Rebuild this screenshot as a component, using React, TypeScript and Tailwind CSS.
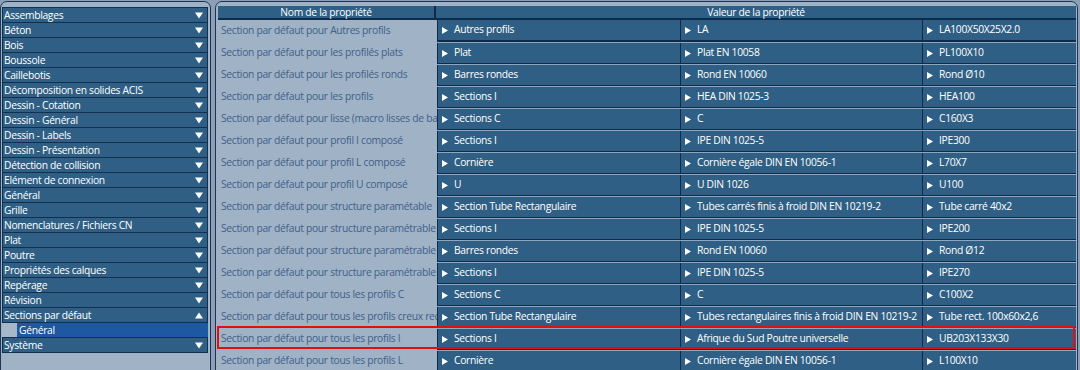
import React from "react";

const categories = [
  "Assemblages",
  "Béton",
  "Bois",
  "Boussole",
  "Caillebotis",
  "Décomposition en solides ACIS",
  "Dessin - Cotation",
  "Dessin - Général",
  "Dessin - Labels",
  "Dessin - Présentation",
  "Détection de collision",
  "Elément de connexion",
  "Général",
  "Grille",
  "Nomenclatures / Fichiers CN",
  "Plat",
  "Poutre",
  "Propriétés des calques",
  "Repérage",
  "Révision",
];

const rows: [string, string, string, string][] = [
  ["Section par défaut pour Autres profils", "Autres profils", "LA", "LA100X50X25X2.0"],
  ["Section par défaut pour les profilés plats", "Plat", "Plat EN 10058", "PL100X10"],
  ["Section par défaut pour les profilés ronds", "Barres rondes", "Rond EN 10060", "Rond Ø10"],
  ["Section par défaut pour les profils", "Sections I", "HEA DIN 1025-3", "HEA100"],
  ["Section par défaut pour lisse (macro lisses de bardage)", "Sections C", "C", "C160X3"],
  ["Section par défaut pour profil I composé", "Sections I", "IPE DIN 1025-5", "IPE300"],
  ["Section par défaut pour profil L composé", "Cornière", "Cornière égale DIN EN 10056-1", "L70X7"],
  ["Section par défaut pour profil U composé", "U", "U DIN 1026", "U100"],
  ["Section par défaut pour structure paramétable", "Section Tube Rectangulaire", "Tubes carrés finis à froid DIN EN 10219-2", "Tube carré 40x2"],
  ["Section par défaut pour structure paramétrable 1", "Sections I", "IPE DIN 1025-5", "IPE200"],
  ["Section par défaut pour structure paramétrable 2", "Barres rondes", "Rond EN 10060", "Rond Ø12"],
  ["Section par défaut pour structure paramétrable 3", "Sections I", "IPE DIN 1025-5", "IPE270"],
  ["Section par défaut pour tous les profils C", "Sections C", "C", "C100X2"],
  ["Section par défaut pour tous les profils creux rectangulaires", "Section Tube Rectangulaire", "Tubes rectangulaires finis à froid DIN EN 10219-2", "Tube rect. 100x60x2,6"],
  ["Section par défaut pour tous les profils I", "Sections I", "Afrique du Sud Poutre universelle", "UB203X133X30"],
  ["Section par défaut pour tous les profils L", "Cornière", "Cornière égale DIN EN 10056-1", "L100X10"],
];

function Down({ up = false }: { up?: boolean }) {
  return (
    <svg width="8" height="7" viewBox="0 0 8 7" className="shrink-0">
      <path d={up ? "M0 6.5 L8 6.5 L4 0.5 Z" : "M0 0.5 L8 0.5 L4 6.5 Z"} fill="#ffffff" />
    </svg>
  );
}

function Play() {
  return (
    <svg width="6" height="7" viewBox="0 0 6 7" className="shrink-0">
      <path d="M0 0 L6 3.5 L0 7 Z" fill="#ffffff" />
    </svg>
  );
}

function CatRow({ label, up = false }: { label: string; up?: boolean }) {
  return (
    <div className="h-[15px] flex items-center justify-between bg-[#2f5f85] border border-[#132f4f] border-t-0 pl-[1px] pr-[4px] text-white leading-none">
      <span className="whitespace-nowrap">{label}</span>
      <Down up={up} />
    </div>
  );
}

function Cell({ text }: { text: string }) {
  return (
    <div className="h-[20px] flex items-center gap-[6px] bg-[#2f5f85] border-l border-[#0f2a4a] pl-[4px] text-white overflow-hidden whitespace-nowrap">
      <Play />
      <span>{text}</span>
    </div>
  );
}

export default function App() {
  return (
    <div className="w-[1080px] h-[370px] overflow-hidden bg-[#8c9fb5] flex gap-[4px] pt-px font-['Open_Sans','Noto_Sans',sans-serif] text-[10.3px] tracking-[-0.3px]">
      {/* left panel */}
      <div className="w-[211px] shrink-0 h-[380px] rounded-t-[7px] border border-[#1b3552] bg-[#9fb2c6] pt-[5px] pl-px pr-[2px]">
        <div className="border-t border-[#132f4f]">
          {categories.map((c) => (
            <CatRow key={c} label={c} />
          ))}
          <CatRow label="Sections par défaut" up />
          <div className="h-[15px] flex items-center bg-[#1f58a2] border-b border-[#132f4f] text-white leading-none">
            <div className="w-[15px] h-full bg-[#a6b7ca]" />
            <span className="pl-[2px]">Général</span>
          </div>
          <CatRow label="Système" />
        </div>
      </div>

      {/* right panel */}
      <div className="flex-1 h-[380px] mr-[2px] rounded-t-[7px] border border-[#1b3552] bg-[#9fb2c6] pt-[4px] pl-[2px] pr-[1px]">
        <div className="h-[14px] flex bg-[#2f5f85] border-b-2 border-[#0f2a4a] text-white leading-none">
          <div className="w-[218px] h-full flex items-center justify-center border-r-2 border-[#0f2a4a]">
            Nom de la propriété
          </div>
          <div className="flex-1 h-full flex items-center justify-center">Valeur de la propriété</div>
        </div>
        {rows.map((r, i) => (
          <div key={i} className="relative h-[22px] grid grid-cols-[219px_243px_242px_1fr]">
            <div className="h-[22px] flex items-center pl-[3px] pr-[2px] text-[#3f6189] overflow-hidden whitespace-nowrap">
              {r[0]}
            </div>
            {[r[1], r[2], r[3]].map((t, j) => (
              <div key={j} className="flex flex-col">
                <div className={i === 0 ? "h-0" : "h-px bg-[#8ea6be]"} />
                <Cell text={t} />
                <div className={i === 0 ? "h-[2px] bg-[#0f2a4a]" : "h-px bg-[#0f2a4a]"} />
              </div>
            ))}
            {i === 14 && (
              <div className="absolute left-[-1px] right-px top-[-2px] bottom-px border-2 border-[#e01010] pointer-events-none" />
            )}
          </div>
        ))}
      </div>
    </div>
  );
}
